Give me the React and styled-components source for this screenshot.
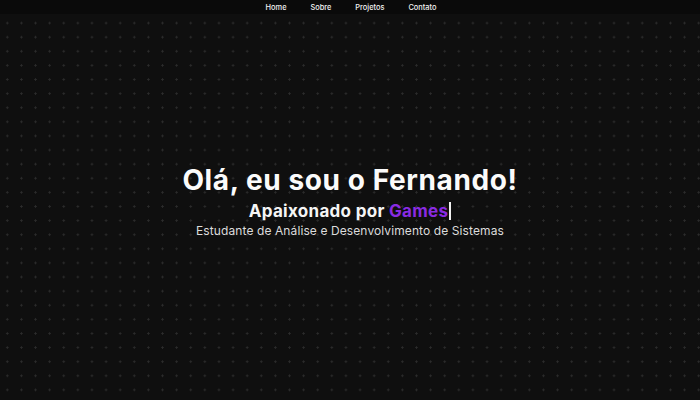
import React from "react";
import styled, { createGlobalStyle } from "styled-components";

const Global = createGlobalStyle`
  html, body { margin: 0; padding: 0; background: #0f0f0f; }
  body { font-family: Inter, "Noto Sans", sans-serif; color: #fff; }
  * { box-sizing: border-box; }
`;

const Page = styled.div`
  position: relative;
  min-height: 100vh;
  background-color: #0f0f0f;
  background-image: radial-gradient(circle at center, #2c2c2c 0 0.9px, transparent 1.2px);
  background-size: 14.11px 14.11px;
  background-position: 0.25px 1.9px;
  display: flex;
  flex-direction: column;
`;

const Nav = styled.nav`
  position: absolute;
  top: 0;
  left: 0;
  right: 0;
  height: 14px;
  background: #0a0a0a;
  display: flex;
  justify-content: center;
  align-items: center;
  gap: 24px;
  padding-left: 2px;
`;

const NavLink = styled.a`
  font-family: Inter, sans-serif;
  font-size: 7.4px;
  font-weight: 500;
  color: #f2f2f2;
  text-decoration: none;
`;

const Hero = styled.main`
  flex: 1;
  min-height: 100vh;
  display: flex;
  flex-direction: column;
  align-items: center;
  justify-content: center;
  text-align: center;
  padding-top: 2px;
`;

const Title = styled.h1`
  margin: 0;
  font-size: 28px;
  font-weight: 700;
  letter-spacing: 0.6px;
  line-height: 34px;
  color: #fbfbfb;
`;

const Subtitle = styled.h2`
  margin: 3px 0 0;
  font-size: 17px;
  font-weight: 700;
  letter-spacing: 0.3px;
  line-height: 22px;
  color: #f5f5f5;
`;

const Accent = styled.span`
  color: #8a2be2;
`;

const Cursor = styled.span`
  display: inline-block;
  width: 2px;
  height: 18px;
  margin-left: 1px;
  background: #f0f0f0;
  vertical-align: -3px;
`;

const Caption = styled.p`
  margin: 0;
  font-size: 12px;
  font-weight: 400;
  line-height: 17px;
  color: #dcdcdc;
  letter-spacing: 0.1px;
`;

export default function App() {
  return (
    <>
      <Global />
      <Page>
        <Nav>
          <NavLink href="#home">Home</NavLink>
          <NavLink href="#sobre">Sobre</NavLink>
          <NavLink href="#projetos">Projetos</NavLink>
          <NavLink href="#contato">Contato</NavLink>
        </Nav>
        <Hero>
          <Title>Olá, eu sou o Fernando!</Title>
          <Subtitle>
            Apaixonado por <Accent>Games</Accent>
            <Cursor />
          </Subtitle>
          <Caption>Estudante de Análise e Desenvolvimento de Sistemas</Caption>
        </Hero>
      </Page>
    </>
  );
}
